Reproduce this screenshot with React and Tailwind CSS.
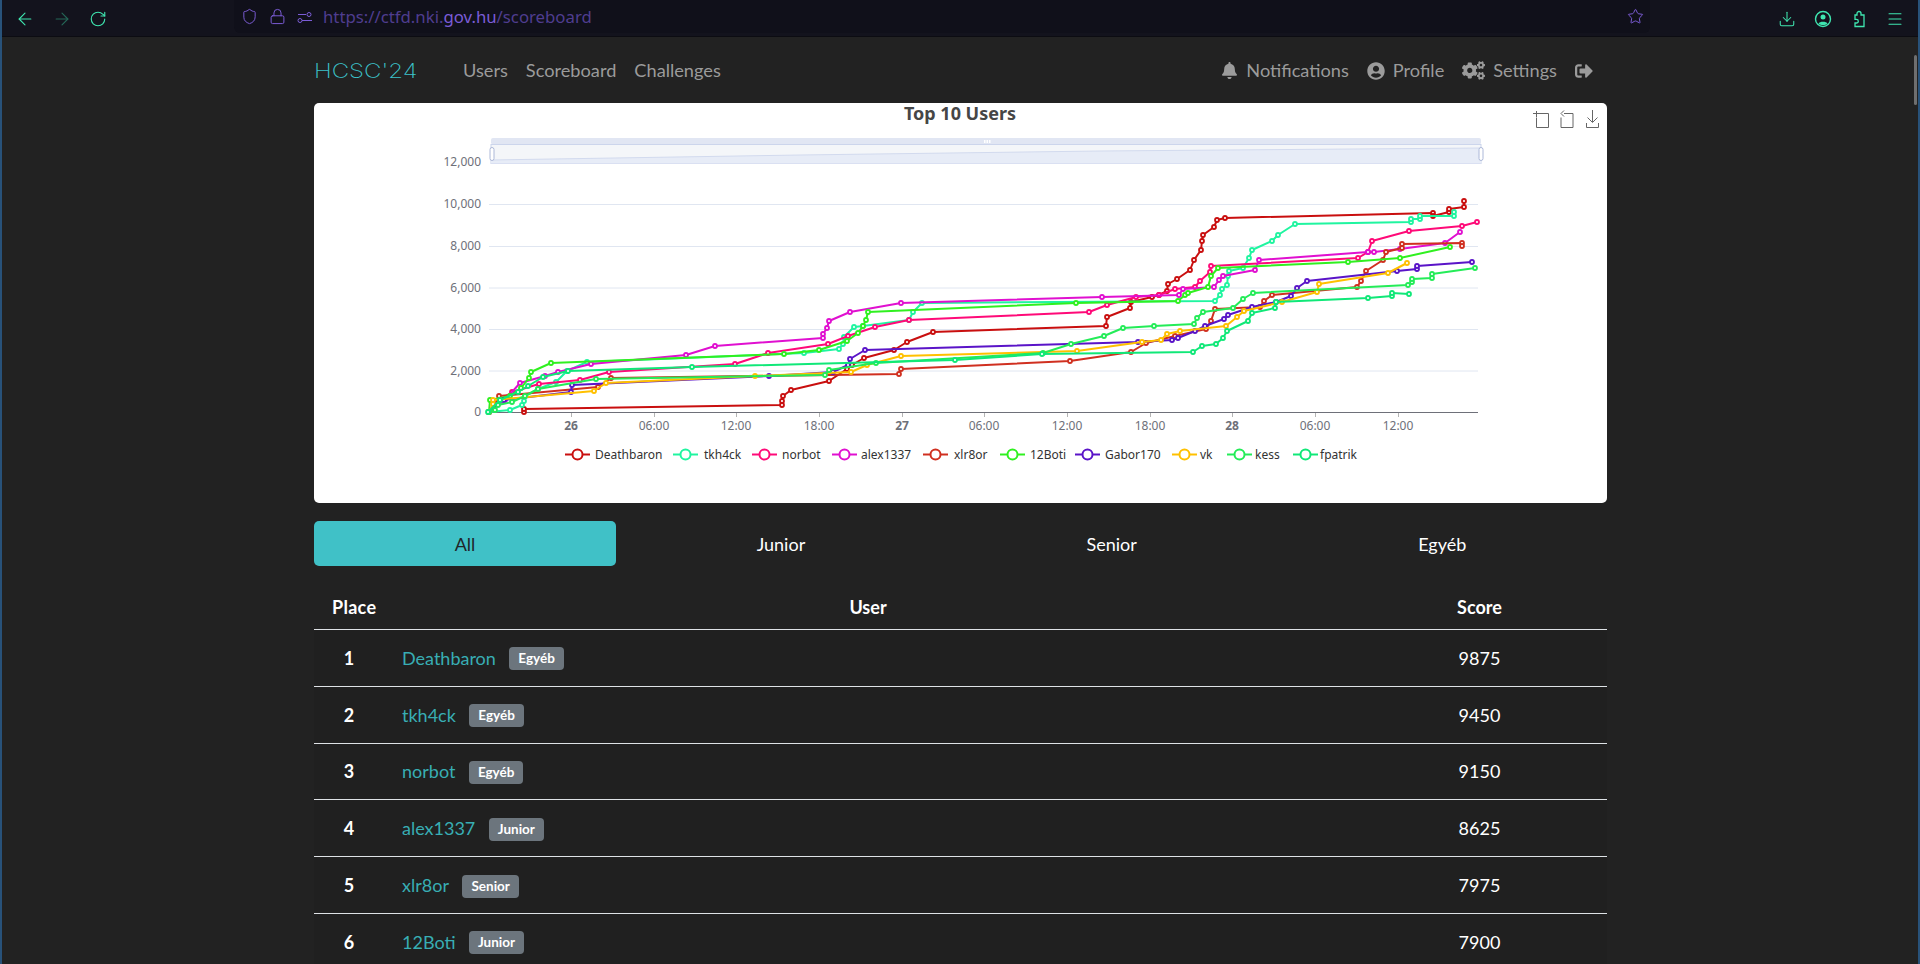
import React from "react";
import {
  ArrowLeft,
  ArrowRight,
  RotateCw,
  Shield,
  Lock,
  Star,
  Download,
  Menu,
} from "lucide-react";
import { FaBell, FaUserCircle, FaCogs, FaSignOutAlt } from "react-icons/fa";

// chart points are page pixels, the svg viewBox matches the card position
const series = [
  {
    name: "Deathbaron",
    color: "#c90f0f",
    legend: [565, 595],
    pts: [[524, 412], [524, 409], [782, 405], [782, 401], [783, 396], [791, 390], [829, 381], [847, 369], [852, 365], [864, 358], [894, 350], [907, 342], [933, 332], [1106, 326], [1107, 317], [1130, 308], [1131, 302], [1152, 297], [1159, 295], [1167, 291], [1168, 284], [1177, 279], [1190, 270], [1194, 260], [1201, 250], [1202, 241], [1203, 235], [1214, 227], [1217, 220], [1225, 218], [1433, 213], [1433, 216], [1449, 212], [1449, 209], [1464, 207], [1464, 201]],
  },
  {
    name: "tkh4ck",
    color: "#20f5a0",
    legend: [673, 704],
    pts: [[489, 412], [510, 410], [522, 405], [524, 401], [525, 396], [538, 389], [556, 382], [567, 371], [587, 362], [804, 353], [839, 349], [843, 344], [844, 337], [854, 327], [863, 326], [909, 320], [913, 312], [922, 303], [1215, 301], [1220, 295], [1222, 289], [1227, 285], [1228, 276], [1229, 271], [1243, 268], [1249, 258], [1252, 250], [1272, 241], [1278, 235], [1295, 224], [1411, 222], [1411, 219], [1420, 219], [1420, 216], [1454, 216], [1454, 212]],
  },
  {
    name: "norbot",
    color: "#ff0a78",
    legend: [752, 782],
    pts: [[489, 412], [497, 402], [512, 392], [539, 384], [580, 380], [609, 372], [735, 364], [768, 353], [828, 344], [848, 336], [875, 327], [909, 320], [1089, 312], [1107, 305], [1136, 297], [1159, 295], [1175, 289], [1195, 287], [1200, 281], [1210, 272], [1211, 266], [1358, 258], [1368, 252], [1372, 241], [1409, 231], [1462, 226], [1477, 222]],
  },
  {
    name: "alex1337",
    color: "#e010d0",
    legend: [832, 861],
    pts: [[489, 412], [505, 400], [520, 383], [545, 376], [558, 372], [591, 364], [686, 355], [715, 346], [823, 338], [823, 334], [827, 328], [829, 321], [850, 312], [901, 303], [1102, 297], [1179, 295], [1183, 289], [1214, 287], [1219, 280], [1223, 276], [1255, 270], [1259, 260], [1368, 252], [1374, 252], [1400, 249], [1445, 243], [1460, 232]],
  },
  {
    name: "xlr8or",
    color: "#d03020",
    legend: [923, 954],
    pts: [[489, 412], [494, 408], [499, 396], [598, 387], [611, 378], [899, 374], [901, 369], [1070, 361], [1131, 352], [1146, 343], [1175, 336], [1206, 329], [1211, 321], [1215, 309], [1260, 307], [1264, 301], [1272, 295], [1357, 287], [1361, 281], [1366, 271], [1383, 260], [1386, 252], [1402, 248], [1402, 244], [1462, 243], [1462, 246]],
  },
  {
    name: "12Boti",
    color: "#30f020",
    legend: [1000, 1030],
    pts: [[489, 412], [490, 400], [510, 396], [521, 388], [529, 378], [531, 372], [551, 363], [784, 354], [819, 350], [847, 341], [858, 333], [863, 326], [866, 320], [868, 312], [1076, 303], [1178, 301], [1185, 295], [1188, 293], [1208, 287], [1211, 276], [1218, 268], [1348, 262], [1400, 258], [1450, 247]],
  },
  {
    name: "Gabor170",
    color: "#5a14c8",
    legend: [1075, 1105],
    pts: [[489, 412], [495, 405], [504, 400], [571, 392], [572, 385], [769, 376], [833, 372], [848, 365], [850, 359], [865, 350], [1138, 342], [1172, 340], [1178, 338], [1195, 331], [1205, 326], [1224, 319], [1228, 315], [1252, 307], [1276, 302], [1291, 296], [1297, 288], [1307, 281], [1397, 271], [1417, 269], [1417, 266], [1472, 262]],
  },
  {
    name: "vk",
    color: "#ffc000",
    legend: [1172, 1200],
    pts: [[489, 412], [493, 404], [493, 400], [594, 391], [606, 383], [755, 376], [851, 372], [867, 365], [901, 356], [1077, 351], [1142, 342], [1161, 340], [1167, 334], [1180, 331], [1226, 326], [1237, 317], [1244, 311], [1282, 302], [1317, 292], [1319, 284], [1388, 273], [1407, 263]],
  },
  {
    name: "kess",
    color: "#24ec58",
    legend: [1227, 1255],
    pts: [[489, 412], [495, 410], [498, 405], [512, 402], [525, 396], [538, 389], [596, 379], [825, 375], [829, 370], [876, 363], [1043, 353], [1071, 344], [1104, 336], [1123, 328], [1154, 326], [1194, 324], [1197, 318], [1203, 312], [1233, 308], [1243, 299], [1253, 293], [1408, 285], [1412, 282], [1412, 279], [1432, 278], [1432, 274], [1475, 268]],
  },
  {
    name: "fpatrik",
    color: "#10e878",
    legend: [1293, 1320],
    pts: [[488, 412], [500, 400], [518, 392], [528, 386], [543, 377], [568, 371], [692, 367], [955, 360], [1042, 354], [1193, 352], [1202, 346], [1216, 344], [1223, 338], [1227, 331], [1248, 321], [1252, 313], [1275, 308], [1276, 302], [1368, 298], [1392, 296], [1392, 293], [1409, 294]],
  },
];

const yLabels = [
  ["12,000", 162],
  ["10,000", 204],
  ["8,000", 246],
  ["6,000", 287.5],
  ["4,000", 329],
  ["2,000", 370.5],
  ["0", 412],
];

const xLabels = [
  ["26", 571, true],
  ["06:00", 654],
  ["12:00", 736],
  ["18:00", 819],
  ["27", 902, true],
  ["06:00", 984],
  ["12:00", 1067],
  ["18:00", 1150],
  ["28", 1232, true],
  ["06:00", 1315],
  ["12:00", 1398],
];

const rows = [
  { place: 1, name: "Deathbaron", tag: "Egyéb", score: 9875 },
  { place: 2, name: "tkh4ck", tag: "Egyéb", score: 9450 },
  { place: 3, name: "norbot", tag: "Egyéb", score: 9150 },
  { place: 4, name: "alex1337", tag: "Junior", score: 8625 },
  { place: 5, name: "xlr8or", tag: "Senior", score: 7975 },
  { place: 6, name: "12Boti", tag: "Junior", score: 7900 },
];

const Chart = () => (
  <svg
    viewBox="314 103 1293 400"
    className="block w-full h-[400px]"
    style={{ fontFamily: "'Noto Sans', sans-serif" }}
  >
    <text x="960" y="120" textAnchor="middle" fontSize="18" fontWeight="700" fill="#464646">
      Top 10 Users
    </text>

    {/* toolbox */}
    <g fill="none" stroke="#666" strokeWidth="1">
      <path d="M1538 113.500h10.500v14h-12v-10" />
      <path d="M1533 113.500h6M1536.500 111v6" />
      <path d="M1564 113.500h9v14h-12v-10M1564 110.500l-3 3 3 3" />
      <path d="M1592.500 110v12M1587.500 117.500l5 5 5-5M1586.500 123v4.500h12V123" />
    </g>

    {/* data zoom */}
    <rect x="491" y="138" width="990" height="6.500" rx="2" fill="#e1e6f3" />
    <rect x="491" y="144.500" width="990" height="19" fill="#f4f6f9" stroke="#ccd5ec" />
    <path d="M491 160L800 155L1100 151L1481 148V163.500H491Z" fill="#e7ecf7" stroke="none" />
    <path d="M491 160L800 155L1100 151L1481 148" fill="none" stroke="#d2daee" />
    <rect x="984" y="140" width="1.500" height="3" fill="#fff" />
    <rect x="986.500" y="140" width="1.500" height="3" fill="#fff" />
    <rect x="989" y="140" width="1.500" height="3" fill="#fff" />
    <rect x="490" y="147.500" width="4" height="13" rx="2" fill="#fff" stroke="#acb8d8" />
    <rect x="1479" y="147.500" width="4" height="13" rx="2" fill="#fff" stroke="#acb8d8" />

    {/* grid + axis */}
    {yLabels.map(([label, y]) => (
      <g key={label}>
        {label !== "12,000" && label !== "0" && (
          <line x1="489" x2="1478" y1={y + 0.5} y2={y + 0.5} stroke="#e0e6f1" />
        )}
        <text x="481" y={y + 4} textAnchor="end" fontSize="12" fill="#6e7079">
          {label}
        </text>
      </g>
    ))}
    <line x1="489" x2="1478" y1="412.500" y2="412.500" stroke="#6e7079" />
    {xLabels.map(([label, x, bold]) => (
      <g key={label + x}>
        <line x1={x + 0.5} x2={x + 0.5} y1="413" y2="417" stroke="#b4b4b4" />
        <text
          x={x}
          y="430"
          textAnchor="middle"
          fontSize="12"
          fontWeight={bold ? 700 : 400}
          fill="#6e7079"
        >
          {label}
        </text>
      </g>
    ))}

    {/* lines */}
    {series.map((s) => (
      <g key={s.name}>
        <polyline
          points={s.pts.map((p) => p.join(",")).join(" ")}
          fill="none"
          stroke={s.color}
          strokeWidth="2"
          strokeLinejoin="bevel"
        />
        {s.pts.map((p, i) => (
          <circle key={i} cx={p[0]} cy={p[1]} r="2" fill="#fff" stroke={s.color} strokeWidth="1.800" />
        ))}
      </g>
    ))}

    {/* legend */}
    {series.map((s) => (
      <g key={s.name}>
        <line x1={s.legend[0]} x2={s.legend[0] + 25} y1="454.500" y2="454.500" stroke={s.color} strokeWidth="2" />
        <circle cx={s.legend[0] + 12.5} cy="454.500" r="5" fill="#fff" stroke={s.color} strokeWidth="2" />
        <text x={s.legend[1]} y="458.500" fontSize="12" fill="#333">
          {s.name}
        </text>
      </g>
    ))}
  </svg>
);

const BrowserBar = () => (
  <div className="flex h-[37px] shrink-0 items-start bg-[#13131d] border-b border-[#0c0c12]">
    <div className="flex h-[37px] w-[232px] items-center pl-[13px] gap-[17px] text-[#3fe6b0]">
      <ArrowLeft size={20} strokeWidth={1.3} />
      <ArrowRight size={20} strokeWidth={1.3} className="opacity-40" />
      <RotateCw size={18} strokeWidth={1.5} />
    </div>
    <div className="flex h-[33px] w-[1416px] items-center rounded-b-md bg-[#10101a] pl-[7px] pr-[6px] text-[#7b5cd6]">
      <Shield size={17} strokeWidth={1.4} />
      <Lock size={17} strokeWidth={1.4} className="ml-[11px]" />
      <svg width="16" height="16" viewBox="0 0 16 16" fill="none" stroke="currentColor" className="ml-[11px]">
        <path d="M1 5.500h8M5 11.500h10" />
        <circle cx="12" cy="5.500" r="2" />
        <circle cx="3" cy="11.500" r="2" />
      </svg>
      <span className="ml-[10px] pt-px text-[16.75px] text-[#4f3d8f] font-['Noto_Sans',sans-serif]">
        https://ctfd.nki.<span className="text-[#7b5cd6]">gov.hu</span>/scoreboard
      </span>
      <Star size={17} strokeWidth={1.4} className="ml-auto" />
    </div>
    <div className="flex h-[37px] flex-1 items-center justify-end gap-[18px] pr-[14px] text-[#3fe6b0]">
      <Download size={18} strokeWidth={1.4} />
      <svg width="18" height="18" viewBox="0 0 18 18" fill="none" stroke="currentColor" strokeWidth="1.400">
        <circle cx="9" cy="9" r="7.500" />
        <circle cx="9" cy="7" r="2.500" fill="currentColor" stroke="none" />
        <path d="M4.500 13.500c1-2.500 8-2.500 9 0c-2 2-7 2-9 0Z" fill="currentColor" stroke="none" />
      </svg>
      <svg width="18" height="18" viewBox="0 0 18 18" fill="none" stroke="currentColor" strokeWidth="1.300">
        <path d="M7 5V3.500a2 2 0 0 1 4 0V5h3v11.500H5V13h1.500a1.800 1.800 0 0 0 0-3.600H5V5Z" />
      </svg>
      <Menu size={18} strokeWidth={1.4} />
    </div>
  </div>
);

const NavBar = () => (
  <div className="flex h-[66px] items-center pt-[2px] text-[18.2px] text-[#9b9b9b]">
    <span className="w-[149px] origin-left scale-x-[1.2] text-[20px] font-extralight text-[#3cc3cb] font-['Inter',sans-serif]">
      HCSC'24
    </span>
    <div className="flex gap-[18px]">
      <span>Users</span>
      <span>Scoreboard</span>
      <span>Challenges</span>
    </div>
    <div className="ml-auto flex items-center gap-[18px] pr-[14px]">
      <span className="flex items-center gap-[8px]">
        <FaBell size={17} />
        Notifications
      </span>
      <span className="flex items-center gap-[8px]">
        <FaUserCircle size={18} />
        Profile
      </span>
      <span className="flex items-center gap-[8px]">
        <FaCogs size={23} />
        Settings
      </span>
      <FaSignOutAlt size={18} />
    </div>
  </div>
);

const App = () => {
  return (
    <div className="relative flex h-screen flex-col overflow-hidden border-x-2 border-[#28527a] bg-[#222222] font-['Lato',sans-serif]">
      <BrowserBar />
      <div className="ml-[312px] w-[1293px]">
        <NavBar />
        <div className="overflow-hidden rounded-[5px] bg-white">
          <Chart />
        </div>

        <div className="mt-[18px] flex text-[18px] text-white">
          {["All", "Junior", "Senior", "Egyéb"].map((tab, i) => (
            <div
              key={tab}
              className={
                i === 0
                  ? "flex h-[45px] flex-auto items-center justify-center rounded-[5px] bg-[#40c1c7] pt-px text-[#212529]"
                  : "flex h-[45px] flex-auto items-center justify-center pt-px"
              }
            >
              {tab}
            </div>
          ))}
        </div>

        <div className="mt-[20px] text-[18px] text-white">
          <div className="grid h-[44px] grid-cols-[70px_1fr_255px] items-center border-b border-[#dee2e6] font-bold text-center">
            <div className="pl-[18px] text-left whitespace-nowrap tracking-[0.3px]">Place</div>
            <div>User</div>
            <div>Score</div>
          </div>
          {rows.map((row) => (
            <div
              key={row.place}
              className="grid h-[56.8px] grid-cols-[70px_1fr_255px] items-center border-b border-[#dee2e6] bg-[#202020] pt-px"
            >
              <div className="text-center font-bold">{row.place}</div>
              <div className="flex items-center pl-[18px]">
                <span className="text-[#38aeb4]">{row.name}</span>
                <span className="ml-[13.5px] mt-px rounded-[4px] bg-[#6c757d] px-[9px] py-[3px] text-[13.5px] font-bold leading-[17px]">
                  {row.tag}
                </span>
              </div>
              <div className="text-center">{row.score}</div>
            </div>
          ))}
        </div>
      </div>
      <div className="absolute right-px top-[55px] h-[50px] w-[3px] rounded-full bg-[#6f6f6f]" />
    </div>
  );
};

export default App;
